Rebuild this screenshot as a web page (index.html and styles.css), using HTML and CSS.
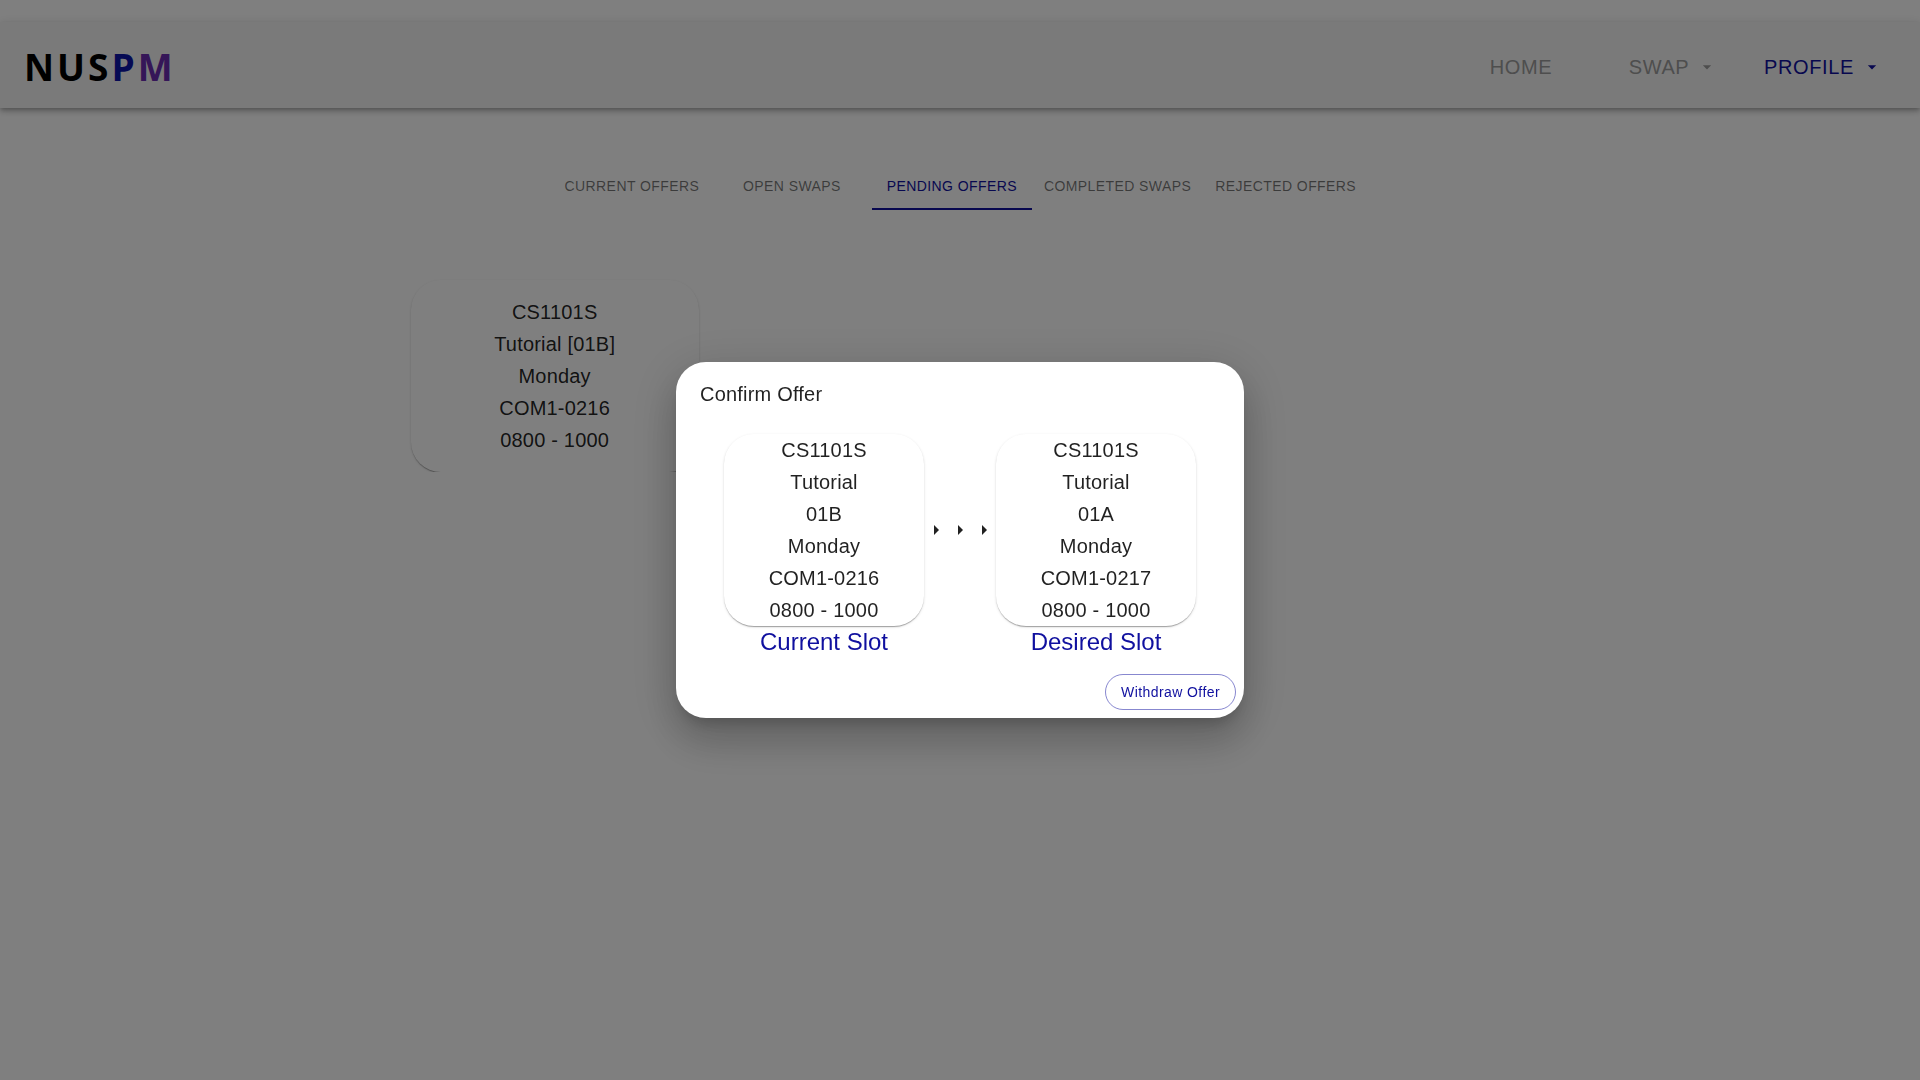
FILE: index.html
```html
<!DOCTYPE html>
<html lang="en">
<head>
  <meta charset="utf-8">
  <meta name="viewport" content="width=device-width, initial-scale=1">
  <title>NUSPM</title>
  <link rel="stylesheet" href="styles.css">
</head>
<body>
  <header class="app-bar">
    <a class="logo" href="#">NUS<span class="logo-p">P</span><span class="logo-m">M</span></a>
    <nav class="main-nav">
      <a class="nav-item" href="#">HOME</a>
      <button class="nav-item" type="button">SWAP
        <svg class="nav-caret" viewBox="0 0 24 24" aria-hidden="true"><path d="M7 10l5 5 5-5z"/></svg>
      </button>
      <button class="nav-item nav-item-active" type="button">PROFILE
        <svg class="nav-caret" viewBox="0 0 24 24" aria-hidden="true"><path d="M7 10l5 5 5-5z"/></svg>
      </button>
    </nav>
  </header>

  <main>
    <div class="tabs" role="tablist">
      <button class="tab" type="button" role="tab">CURRENT OFFERS</button>
      <button class="tab" type="button" role="tab">OPEN SWAPS</button>
      <button class="tab tab-selected" type="button" role="tab" aria-selected="true">PENDING OFFERS</button>
      <button class="tab" type="button" role="tab">COMPLETED SWAPS</button>
      <button class="tab" type="button" role="tab">REJECTED OFFERS</button>
    </div>

    <div class="offers">
      <article class="card offer-card">
        <p>CS1101S</p>
        <p>Tutorial [01B]</p>
        <p>Monday</p>
        <p>COM1-0216</p>
        <p>0800 - 1000</p>
      </article>
    </div>
  </main>

  <div class="backdrop">
    <section class="dialog" role="dialog" aria-modal="true" aria-labelledby="dialog-title">
      <h2 class="dialog-title" id="dialog-title">Confirm Offer</h2>
      <div class="dialog-content">
        <div class="slot">
          <div class="card">
            <p>CS1101S</p>
            <p>Tutorial</p>
            <p>01B</p>
            <p>Monday</p>
            <p>COM1-0216</p>
            <p>0800 - 1000</p>
          </div>
          <h3 class="slot-label">Current Slot</h3>
        </div>
        <div class="arrows" aria-hidden="true">
          <svg class="arrow" viewBox="0 0 24 24"><path d="M10 17l5-5-5-5v10z"/></svg>
          <svg class="arrow" viewBox="0 0 24 24"><path d="M10 17l5-5-5-5v10z"/></svg>
          <svg class="arrow" viewBox="0 0 24 24"><path d="M10 17l5-5-5-5v10z"/></svg>
        </div>
        <div class="slot">
          <div class="card">
            <p>CS1101S</p>
            <p>Tutorial</p>
            <p>01A</p>
            <p>Monday</p>
            <p>COM1-0217</p>
            <p>0800 - 1000</p>
          </div>
          <h3 class="slot-label">Desired Slot</h3>
        </div>
      </div>
      <div class="dialog-actions">
        <button class="outlined-button" type="button">Withdraw Offer</button>
      </div>
    </section>
  </div>
</body>
</html>
```
FILE: styles.css
```css
:root {
  --primary: #10109f;
  --text: rgba(0, 0, 0, 0.87);
  --text-muted: rgba(0, 0, 0, 0.54);
}

* {
  box-sizing: border-box;
}

body {
  margin: 0;
  padding-top: 22px;
  background: #fff;
  color: var(--text);
  font-family: "Liberation Sans", Arial, sans-serif;
  font-size: 20px;
  line-height: 32px;
}

p,
h2,
h3 {
  margin: 0;
  font-weight: 400;
}

button {
  border: 0;
  background: none;
  font-family: inherit;
  cursor: pointer;
}

.app-bar {
  display: flex;
  align-items: center;
  justify-content: space-between;
  height: 86px;
  padding: 4px 24px 0;
  background: #f5f5f5;
  box-shadow: 0 2px 4px -1px rgba(0, 0, 0, 0.2),
    0 4px 5px 0 rgba(0, 0, 0, 0.14),
    0 1px 10px 0 rgba(0, 0, 0, 0.12);
}

.logo {
  color: #000;
  font-family: "Open Sans", "Noto Sans", sans-serif;
  font-size: 37px;
  font-weight: 700;
  letter-spacing: 3px;
  text-decoration: none;
}

.logo-p {
  color: #0c14a8;
}

.logo-m {
  color: #6a2cb0;
}

.main-nav {
  display: grid;
  grid-template-columns: repeat(3, 150px);
}

.nav-item {
  display: flex;
  align-items: center;
  justify-content: center;
  gap: 8px;
  padding: 8px;
  color: #9c9c9c;
  font-size: 20px;
  line-height: 32px;
  letter-spacing: 0.03em;
  text-decoration: none;
}

.nav-item-active {
  color: var(--primary);
}

.nav-caret {
  width: 20px;
  height: 20px;
  margin-right: -4px;
  fill: currentColor;
}

.tabs {
  display: flex;
  justify-content: center;
  padding-top: 54px;
}

.tab {
  min-width: 160px;
  height: 48px;
  padding: 8px 12px 6px;
  border-bottom: 2px solid transparent;
  color: var(--text-muted);
  font-size: 14px;
  line-height: 24px;
  letter-spacing: 0.03em;
}

.tab-selected {
  border-color: var(--primary);
  color: var(--primary);
}

.offers {
  display: grid;
  grid-template-columns: repeat(3, 1fr);
  justify-items: center;
  max-width: 1216px;
  margin: 0 auto;
  padding-top: 70px;
}

.card {
  border-radius: 30px;
  background: #fff;
  text-align: center;
  letter-spacing: 0.01em;
  box-shadow: 0 2px 1px -1px rgba(0, 0, 0, 0.2),
    0 1px 1px 0 rgba(0, 0, 0, 0.14),
    0 1px 3px 0 rgba(0, 0, 0, 0.12);
}

.offer-card {
  width: 288px;
  padding: 16px;
}

.backdrop {
  position: fixed;
  inset: 0;
  display: flex;
  align-items: center;
  justify-content: center;
  background: rgba(0, 0, 0, 0.5);
}

.dialog {
  border-radius: 30px;
  background: #fff;
  box-shadow: 0 11px 15px -7px rgba(0, 0, 0, 0.2),
    0 24px 38px 3px rgba(0, 0, 0, 0.14),
    0 9px 46px 8px rgba(0, 0, 0, 0.12);
}

.dialog-title {
  padding: 16px 24px;
  font-size: 20px;
  letter-spacing: 0.01em;
}

.dialog-content {
  display: flex;
  padding: 8px 48px;
}

.slot {
  width: 200px;
}

.slot-label {
  color: var(--primary);
  font-size: 24px;
  text-align: center;
}

.arrows {
  display: flex;
  align-items: center;
  height: 192px;
}

.arrow {
  width: 24px;
  height: 24px;
  fill: var(--text);
}

.dialog-actions {
  display: flex;
  justify-content: flex-end;
  padding: 8px;
}

.outlined-button {
  height: 36px;
  padding: 5px 15px;
  border: 1px solid rgba(16, 16, 159, 0.5);
  border-radius: 20px;
  color: var(--primary);
  font-size: 14px;
  line-height: 24px;
  letter-spacing: 0.03em;
}
```
